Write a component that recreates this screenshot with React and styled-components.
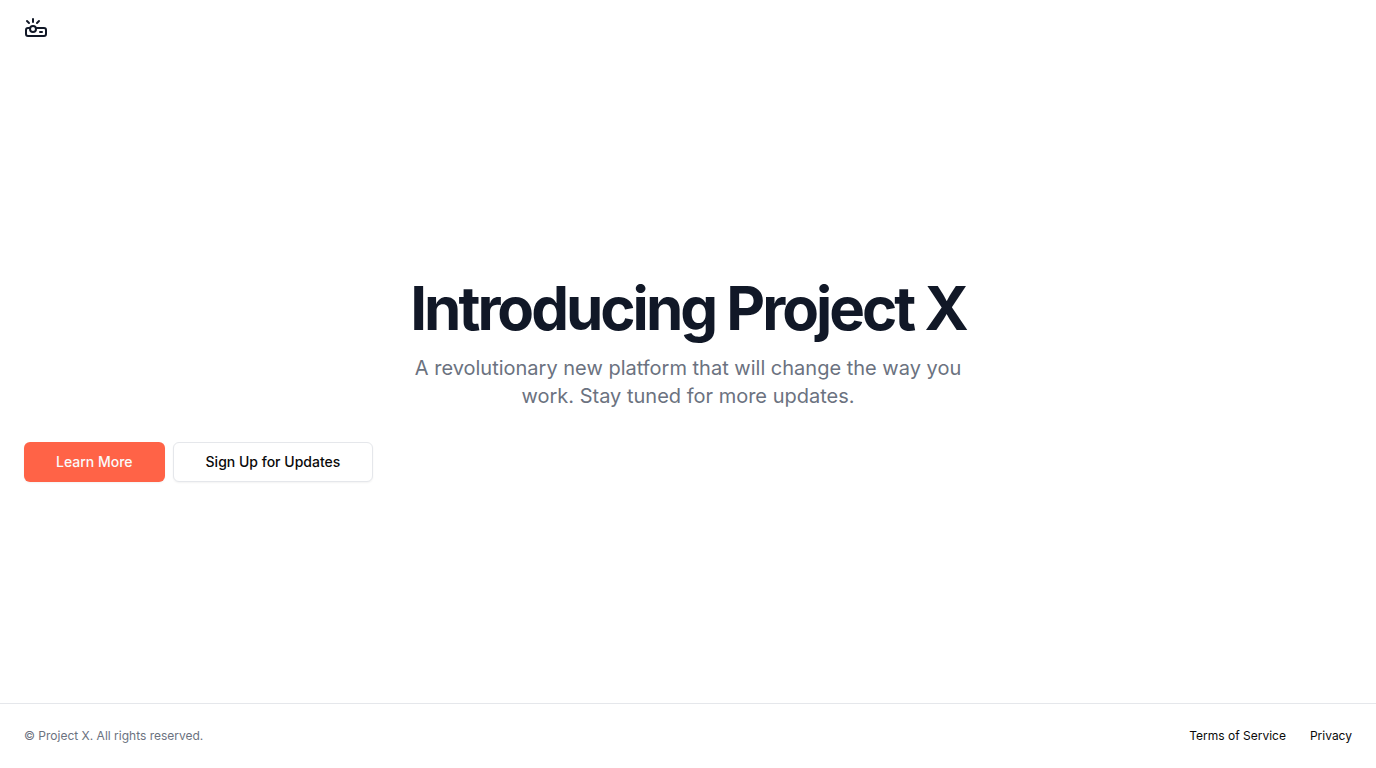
import React from "react";
import styled, { createGlobalStyle, css } from "styled-components";
import { Projector } from "lucide-react";

const GlobalStyle = createGlobalStyle`
  *, *::before, *::after { box-sizing: border-box; }
  body {
    margin: 0;
    background: #ffffff;
    color: #0a0a0a;
    font-family: Inter, "Liberation Sans", sans-serif;
    font-size: 16px;
    line-height: 24px;
    font-optical-sizing: none;
    text-rendering: optimizeSpeed;
  }
`;

const Page = styled.div`
  display: flex;
  flex-direction: column;
  min-height: 100vh;
`;

const Header = styled.header`
  display: flex;
  align-items: center;
  height: 56px;
  padding: 0 24px;
`;

const LogoLink = styled.a`
  display: flex;
  color: #111827;
`;

const Main = styled.main`
  flex: 1;
  display: flex;
  flex-direction: column;
  justify-content: center;
  gap: 32px;
  padding: 0 24px;
`;

const Intro = styled.div`
  display: flex;
  flex-direction: column;
  align-items: center;
  gap: 16px;
  text-align: center;
`;

const Title = styled.h1`
  margin: 0;
  color: #111827;
  font-size: 60px;
  font-weight: 700;
  line-height: 60px;
  letter-spacing: -0.05em;
`;

const Lead = styled.p`
  margin: 0;
  max-width: 600px;
  color: #6b7280;
  font-size: 20px;
  line-height: 28px;
`;

const Actions = styled.div`
  display: flex;
  flex-wrap: wrap;
  gap: 8px;
`;

const Button = styled.button`
  height: 40px;
  padding: 0 32px;
  border: 0;
  border-radius: 6px;
  background: #ff6347;
  color: #fafafa;
  font: 500 14px/20px Inter, "Liberation Sans", sans-serif;
  box-shadow: 0 1px 2px rgba(0, 0, 0, 0.05);
  cursor: pointer;

  ${(p) =>
    p.$outline &&
    css`
      border: 1px solid #e5e7eb;
      background: #ffffff;
      color: #0a0a0a;
    `}
`;

const Footer = styled.footer`
  display: flex;
  align-items: center;
  justify-content: space-between;
  padding: 24px;
  border-top: 1px solid #e5e7eb;
  font-size: 12px;
  line-height: 16px;
`;

const Copyright = styled.p`
  margin: 0;
  color: #6b7280;
`;

const FooterNav = styled.nav`
  display: flex;
  gap: 24px;
`;

const FooterLink = styled.a`
  color: #0a0a0a;
  text-decoration: none;
`;

export default function App() {
  return (
    <Page>
      <GlobalStyle />
      <Header>
        <LogoLink href="#" aria-label="Project X">
          <Projector size={24} />
        </LogoLink>
      </Header>
      <Main>
        <Intro>
          <Title>Introducing Project X</Title>
          <Lead>
            A revolutionary new platform that will change the way you work. Stay
            tuned for more updates.
          </Lead>
        </Intro>
        <Actions>
          <Button type="button">Learn More</Button>
          <Button type="button" $outline>Sign Up for Updates</Button>
        </Actions>
      </Main>
      <Footer>
        <Copyright>© Project X. All rights reserved.</Copyright>
        <FooterNav>
          <FooterLink href="#terms">Terms of Service</FooterLink>
          <FooterLink href="#privacy">Privacy</FooterLink>
        </FooterNav>
      </Footer>
    </Page>
  );
}
